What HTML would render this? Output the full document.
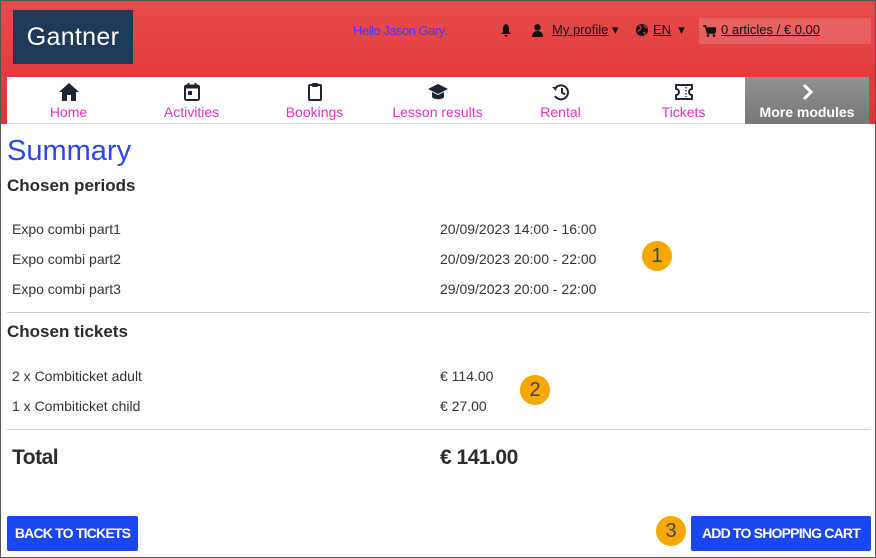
<!DOCTYPE html>
<html><head><meta charset="utf-8"><style>
*{margin:0;padding:0;box-sizing:border-box}
body{width:876px;height:558px;overflow:hidden;font-family:"Liberation Sans",sans-serif;background:#fff;position:relative;color:#333}
.frame{position:absolute;left:0;top:0;width:876px;height:558px;border:1px solid #555;pointer-events:none;z-index:10}
.hdr{position:absolute;left:0;top:0;width:876px;height:124px;background:linear-gradient(#e64b4b,#e03434)}
.logo{position:absolute;left:13px;top:10px;width:120px;height:54px;background:#1f3a58;color:#fff;font-size:25px;line-height:54px;text-align:center;letter-spacing:0.3px}
.hello{position:absolute;left:353px;top:23px;font-size:13px;color:#4a3cf0;letter-spacing:-0.5px}
.top{position:absolute;top:22px;font-size:13px;color:#111}
.top u{text-decoration:underline}
.cart{position:absolute;left:699px;top:18px;width:172px;height:26px;background:rgba(255,255,255,0.15);border-radius:2px}
.nav{position:absolute;left:7px;top:77px;width:738px;height:47px;background:#fff;border-bottom:1px solid #e2e2e2}
.ni{position:absolute;top:0;width:123px;height:46px;text-align:center}
.ni svg{position:absolute;left:50%;top:6px;margin-left:-10px}
.ni span{position:absolute;left:0;right:0;top:27px;font-size:14px;color:#e631c6}
.more{position:absolute;left:745px;top:77px;width:124px;height:47px;background:linear-gradient(#919191,#777);color:#fff;text-align:center}
.more span{position:absolute;left:0;right:0;top:27px;font-size:14px;font-weight:bold}
h1{position:absolute;left:7px;top:135px;font-size:29px;font-weight:normal;color:#2a45f5}
h2{position:absolute;left:7px;font-size:17px;font-weight:bold;color:#2b2b2b}
.r{position:absolute;font-size:14px;color:#333}
.hr{position:absolute;left:7px;width:864px;height:1px;background:#cfcfcf}
.tot{position:absolute;top:446px;font-size:21px;font-weight:bold;color:#2b2b2b;letter-spacing:-0.5px}
.btn{position:absolute;top:516px;height:35px;background:#1b47f2;color:#fff;font-size:14px;font-weight:bold;line-height:35px;text-align:center;border-radius:2px;letter-spacing:-0.8px}
.badge{position:absolute;width:30px;height:30px;border-radius:50%;background:#f5a800;color:#444;font-size:20px;line-height:30px;text-align:center}
</style></head><body>
<div class="hdr"></div>
<div class="logo">Gantner</div>
<div class="hello">Hello Jason Gary.</div>
<svg style="position:absolute;left:500px;top:24px" width="12" height="13" viewBox="0 0 12 13"><path d="M6 0C3.5 1 3 3 3 5v3L1 10h10L9 8V5C9 3 8.5 1 6 0z M4.5 11a1.5 1.5 0 003 0z" fill="#111"/></svg>
<svg style="position:absolute;left:532px;top:24px" width="11" height="13" viewBox="0 0 11 13"><circle cx="5.5" cy="3.3" r="3.2" fill="#111"/><path d="M0 13c0-4 2-6 5.5-6S11 9 11 13z" fill="#111"/></svg>
<div class="top" style="left:552px"><u>My profile</u> ▾</div>
<svg style="position:absolute;left:636px;top:24px" width="12" height="12" viewBox="0 0 12 12"><circle cx="6" cy="6" r="6" fill="#111"/><path d="M3 2l2 1 0 2-2 1-1 2M8 1l1 2 2 1M7 8l2 1 0 2" stroke="#e54040" stroke-width="1" fill="none"/></svg>
<div class="top" style="left:653px"><u>EN</u> &nbsp;▾</div>
<div class="cart"></div>
<svg style="position:absolute;left:703px;top:25px" width="13" height="12" viewBox="0 0 13 12"><path d="M0 1h2.5l2 7h7l1.5-5H4" fill="none" stroke="#111" stroke-width="1.6"/><path d="M4 3h9l-1.5 5h-7z" fill="#111"/><circle cx="5" cy="10.5" r="1.3" fill="#111"/><circle cx="11" cy="10.5" r="1.3" fill="#111"/></svg>
<div class="top" style="left:721px"><u>0 articles / € 0.00</u></div>

<div class="nav">
<div class="ni" style="left:0"><svg width="20" height="18" viewBox="0 0 20 18"><path d="M10 0L0 9h3v9h5v-6h4v6h5V9h3z" fill="#1d2630"/></svg><span>Home</span></div>
<div class="ni" style="left:123px"><svg width="20" height="18" viewBox="0 0 20 18"><rect x="3" y="2.5" width="14" height="14.5" rx="1.5" fill="none" stroke="#1d2630" stroke-width="2"/><rect x="3" y="2.5" width="14" height="3" fill="#1d2630"/><rect x="5.5" y="0" width="2" height="4" fill="#1d2630"/><rect x="12.5" y="0" width="2" height="4" fill="#1d2630"/><rect x="6" y="8" width="4" height="4" fill="#1d2630"/></svg><span>Activities</span></div>
<div class="ni" style="left:246px"><svg width="20" height="18" viewBox="0 0 20 18"><rect x="4" y="2" width="12" height="15" rx="1" fill="none" stroke="#1d2630" stroke-width="2"/><rect x="7" y="0" width="6" height="4" rx="1" fill="#1d2630"/></svg><span>Bookings</span></div>
<div class="ni" style="left:369px"><svg width="20" height="18" viewBox="0 0 20 18"><path d="M10 1L0 6l10 5 10-5z" fill="#1d2630"/><path d="M4 9v5c2 3 10 3 12 0V9l-6 3z" fill="#1d2630"/></svg><span>Lesson results</span></div>
<div class="ni" style="left:492px"><svg width="20" height="18" viewBox="0 0 20 18"><path d="M4.5 5A7 7 0 1 1 4 13" fill="none" stroke="#1d2630" stroke-width="2"/><path d="M1 4l5 0-1 4z" fill="#1d2630"/><path d="M11 5v4.5l3 2" fill="none" stroke="#1d2630" stroke-width="2"/></svg><span>Rental</span></div>
<div class="ni" style="left:615px"><svg width="20" height="18" viewBox="0 0 20 18"><path d="M2 2h16v4a3 3 0 000 6v4H2v-4a3 3 0 000-6z" fill="none" stroke="#1d2630" stroke-width="2" stroke-linejoin="round"/><path d="M12 4v10" stroke="#1d2630" stroke-width="1.3" stroke-dasharray="1.5 1.5"/></svg><span>Tickets</span></div>
</div>
<div class="more"><svg style="position:absolute;left:57px;top:6px" width="12" height="18" viewBox="0 0 12 18"><path d="M2 2l7 7-7 7" fill="none" stroke="#fff" stroke-width="3"/></svg><span>More modules</span></div>

<h1>Summary</h1>
<h2 style="top:176px">Chosen periods</h2>
<div class="r" style="left:12px;top:221px">Expo combi part1</div><div class="r" style="left:440px;top:221px">20/09/2023 14:00 - 16:00</div>
<div class="r" style="left:12px;top:251px">Expo combi part2</div><div class="r" style="left:440px;top:251px">20/09/2023 20:00 - 22:00</div>
<div class="r" style="left:12px;top:281px">Expo combi part3</div><div class="r" style="left:440px;top:281px">29/09/2023 20:00 - 22:00</div>
<div class="hr" style="top:312px"></div>
<h2 style="top:322px">Chosen tickets</h2>
<div class="r" style="left:12px;top:368px">2 x Combiticket adult</div><div class="r" style="left:440px;top:368px">€ 114.00</div>
<div class="r" style="left:12px;top:398px">1 x Combiticket child</div><div class="r" style="left:440px;top:398px">€ 27.00</div>
<div class="hr" style="top:429px"></div>
<div class="tot" style="left:12px">Total</div>
<div class="tot" style="left:440px">€ 141.00</div>
<div class="btn" style="left:7px;width:131px">BACK TO TICKETS</div>
<div class="btn" style="left:691px;width:180px">ADD TO SHOPPING CART</div>
<div class="badge" style="left:642px;top:241px">1</div>
<div class="badge" style="left:520px;top:375px">2</div>
<div class="badge" style="left:656px;top:516px">3</div>
<div class="frame"></div>
</body></html>
